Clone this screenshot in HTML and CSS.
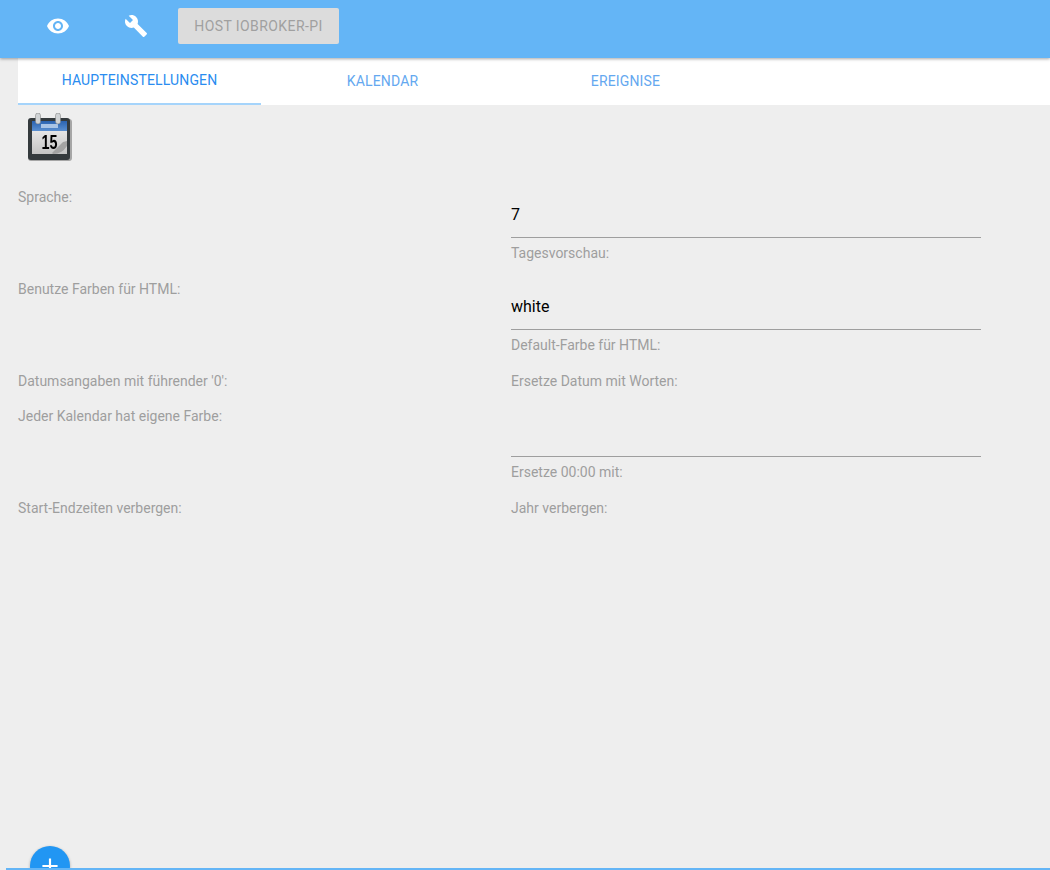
FILE: index.html
```html
<!DOCTYPE html>
<html lang="de">
<head>
<meta charset="utf-8">
<title>iCal</title>
<link rel="stylesheet" href="styles.css">
</head>
<body>
<header class="topbar">
  <button class="icon-btn eye" aria-label="Ansicht">
    <svg viewBox="0 0 24 24" width="24" height="24"><path d="M12 4.5C7 4.5 2.73 7.61 1 12c1.73 4.39 6 7.500 11 7.500s9.270-3.110 11-7.500c-1.730-4.390-6-7.500-11-7.500zM12 17c-2.760 0-5-2.240-5-5s2.240-5 5-5 5 2.240 5 5-2.240 5-5 5zm0-8c-1.660 0-3 1.340-3 3s1.340 3 3 3 3-1.340 3-3-1.340-3-3-3z"/></svg>
  </button>
  <button class="icon-btn wrench" aria-label="Einstellungen">
    <svg viewBox="0 0 24 24" width="24" height="24"><path d="M22.700 19l-9.100-9.100c.9-2.300.4-5-1.500-6.900-2-2-5-2.400-7.400-1.300L9 6 6 9 1.600 4.700C.4 7.100.9 10.100 2.900 12.100c1.900 1.900 4.600 2.400 6.900 1.500l9.100 9.100c.4.4 1 .4 1.400 0l2.300-2.300c.5-.4.5-1.100.1-1.400z"/></svg>
  </button>
  <button class="host-btn">HOST IOBROKER-PI</button>
</header>
<nav class="tabs">
  <a class="tab active">HAUPTEINSTELLUNGEN</a>
  <a class="tab">KALENDAR</a>
  <a class="tab last">EREIGNISE</a>
</nav>
<main class="content">
  <div class="logo">
    <svg viewBox="0 0 48 48" width="48" height="48">
      <defs>
        <linearGradient id="page" x1="0" y1="0" x2="0" y2="1"><stop offset="0" stop-color="#f4f4f4"/><stop offset="1" stop-color="#c4c4c4"/></linearGradient>
        <linearGradient id="head" x1="0" y1="0" x2="0" y2="1"><stop offset="0" stop-color="#2a62b0"/><stop offset="1" stop-color="#5b8fd0"/></linearGradient>
      </defs>
      <rect x="2" y="6" width="44" height="42" rx="3" fill="#000" opacity=".3"/>
      <rect x="2" y="5" width="42" height="42" rx="3" fill="#343a3d"/>
      <rect x="6" y="8" width="35" height="33" fill="url(#page)"/>
      <rect x="6" y="8" width="35" height="10" fill="url(#head)"/>
      <rect x="15" y="11" width="17" height="4" fill="#a9c4e6"/>
      <rect x="9.500" y="0" width="5" height="11" rx="2.500" fill="#d0d3d5" stroke="#777" stroke-width=".5"/>
      <rect x="29.500" y="0" width="5" height="11" rx="2.500" fill="#d0d3d5" stroke="#777" stroke-width=".5"/>
      <path d="M26 40 L37 29 L41 28 L41 33 Q36 41 27 41 Z" fill="#a3a3a3"/>
      <text class="logo-num" x="15.500" y="36" textLength="16" lengthAdjust="spacingAndGlyphs">15</text>
    </svg>
  </div>
  <form class="form">
    <div class="row tall">
      <div class="cell"><span class="label">Sprache:</span></div>
      <div class="field">
        <div class="value">7</div>
        <div class="label">Tagesvorschau:</div>
      </div>
    </div>
    <div class="row tall">
      <div class="cell"><span class="label">Benutze Farben für HTML:</span></div>
      <div class="field">
        <div class="value">white</div>
        <div class="label">Default-Farbe für HTML:</div>
      </div>
    </div>
    <div class="row short">
      <div class="cell"><span class="label">Datumsangaben mit führender '0':</span></div>
      <div class="cell"><span class="label">Ersetze Datum mit Worten:</span></div>
    </div>
    <div class="row tall">
      <div class="cell"><span class="label">Jeder Kalendar hat eigene Farbe:</span></div>
      <div class="field">
        <div class="value">&nbsp;</div>
        <div class="label">Ersetze 00:00 mit:</div>
      </div>
    </div>
    <div class="row short">
      <div class="cell"><span class="label">Start-Endzeiten verbergen:</span></div>
      <div class="cell"><span class="label">Jahr verbergen:</span></div>
    </div>
  </form>
</main>
<button class="fab" aria-label="Hinzufügen">
  <svg viewBox="0 0 24 24" width="26" height="26"><path d="M19 13h-6v6h-2v-6H5v-2h6V5h2v6h6v2z"/></svg>
</button>
<div class="bottom-line"></div>
</body>
</html>
```
FILE: styles.css
```css
* { box-sizing: border-box; }
html, body { height: 100%; }
body {
  margin: 0;
  height: 870px;
  overflow: hidden;
  position: relative;
  background: #eeeeee;
  font-family: Roboto, "Noto Sans", sans-serif;
  color: #000;
}
.topbar {
  height: 58px;
  background: #64b5f6;
  display: flex;
  align-items: flex-start;
  padding: 8px 0 0 34px;
  box-shadow: 0 1px 3px rgba(0,0,0,.35);
  position: relative;
  z-index: 2;
}
.icon-btn {
  width: 48px;
  height: 36px;
  margin: 0;
  padding: 0;
  border: 0;
  background: none;
  display: flex;
  align-items: center;
  justify-content: center;
}
.icon-btn svg { fill: #fff; display: block; }
.eye { margin-right: 30px; }
.wrench { margin-right: 18px; }
.host-btn {
  width: 161px;
  height: 36px;
  border: 0;
  border-radius: 2px;
  background: #dcdcdc;
  color: #a0a0a0;
  font: 400 14px Roboto, sans-serif;
  letter-spacing: .42px;
  padding: 0;
}
.tabs {
  margin-left: 18px;
  height: 47px;
  background: #fff;
  display: flex;
  font-size: 14px;
  letter-spacing: .15px;
}
.tab {
  width: 243px;
  height: 47px;
  display: flex;
  align-items: center;
  justify-content: center;
  color: #64a8f0;
  padding-bottom: 2px;
}
.tab.active {
  color: #2a8cf0;
  border-bottom: 2px solid #a5d4fb;
}
.content { padding: 5px 0 0 18px; }
.logo { height: 75px; padding: 3px 0 0 8px; }
.logo svg { display: block; filter: blur(.35px); }
.logo-num { font: 700 20px "Liberation Sans", sans-serif; fill: #000; }
.row {
  display: grid;
  grid-template-columns: 493px 470px;
}
.tall { height: 92px; }
.short { height: 35px; }
.label {
  font-size: 14px;
  line-height: 24px;
  color: #9e9e9e;
}
.value {
  padding-top: 18px;
  font-size: 16px;
  line-height: 24px;
  height: 53px;
  border-bottom: 1px solid #9e9e9e;
}
.field .label { padding-top: 3px; }
.fab {
  position: absolute;
  left: 30px;
  top: 846px;
  width: 40px;
  height: 40px;
  border: 0;
  padding: 0;
  border-radius: 50%;
  background: #2196f3;
  display: flex;
  align-items: center;
  justify-content: center;
  box-shadow: 0 1px 3px rgba(0,0,0,.3);
}
.fab svg { fill: #fff; display: block; }
.bottom-line {
  position: absolute;
  left: 6px;
  right: 0;
  bottom: 0;
  height: 2px;
  background: #64b5f6;
}
```
